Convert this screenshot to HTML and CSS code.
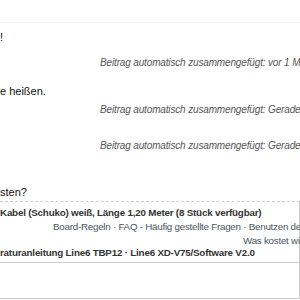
FILE: index.html
```html
<!DOCTYPE html>
<html lang="de">
<head>
  <meta charset="UTF-8">
  <title>Forum</title>
  <link rel="stylesheet" href="styles.css">
</head>
<body>
  <div class="topbar"></div>
  <div class="post">
    <p class="msg msg-first">!</p>
    <p class="merged merged-first">Beitrag automatisch zusammengefügt: vor 1 Minute</p>
    <p class="msg msg-second">e heißen.</p>
    <p class="merged merged-second">Beitrag automatisch zusammengefügt: Gerade eben</p>
    <p class="merged merged-third">Beitrag automatisch zusammengefügt: Gerade eben</p>
    <p class="msg msg-last">sten?</p>
  </div>
  <div class="related">
    <p class="related-title">Kabel (Schuko) weiß, Länge 1,20 Meter (8 Stück verfügbar)</p>
    <p class="related-links">Board-Regeln · FAQ - Häufig gestellte Fragen · Benutzen der Suche</p>
    <p class="related-links related-right">Was kostet wie viel?</p>
    <p class="related-title related-last">raturanleitung Line6 TBP12 · Line6 XD-V75/Software V2.0</p>
  </div>
  <div class="footer"></div>
</body>
</html>
```
FILE: styles.css
```css
body {
  margin: 0;
  width: 300px;
  overflow: hidden;
  background: #fff;
  font-family: "Liberation Sans", Arial, sans-serif;
  color: #111;
}

p {
  margin: 0;
  white-space: nowrap;
}

.topbar {
  height: 22px;
  border-bottom: 1px solid #f0f0f0;
}

.post {
  padding-bottom: 2px;
}

.msg {
  font-size: 11px;
  line-height: 14px;
}

.msg-first {
  margin-top: 7px;
}

.msg-second {
  margin-top: 14px;
}

.msg-last {
  margin-top: 32px;
}

.merged {
  font-size: 10px;
  line-height: 14px;
  font-style: italic;
  letter-spacing: -0.15px;
  color: #555;
  padding-left: 100px;
}

.merged-first {
  margin-top: 12px;
}

.merged-second {
  margin-top: 5px;
}

.merged-third {
  margin-top: 22px;
}

.related {
  border-top: 1px dashed #ccc;
  border-right: 1px solid #ccc;
  border-bottom: 1px solid #ccc;
  padding: 4px 0 2px;
}

.related-title {
  font-size: 9.8px;
  line-height: 14px;
  font-weight: bold;
  letter-spacing: -0.2px;
  color: #333;
}

.related-last {
  margin-top: -2px;
}

.related-links {
  font-size: 9.8px;
  line-height: 14px;
  letter-spacing: -0.25px;
  color: #4a5561;
  padding-left: 53px;
}

.related-right {
  padding-left: 243px;
}

.footer {
  height: 35px;
  border-bottom: 1px solid #ccc;
  border-right: 1px solid #ccc;
}
```
